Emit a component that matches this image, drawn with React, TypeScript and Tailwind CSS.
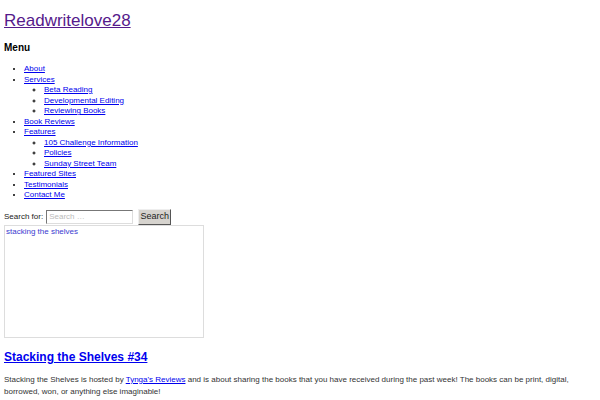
import React from 'react';

type MenuItem = { label: string; children?: string[] };

const menu: MenuItem[] = [
  { label: 'About' },
  { label: 'Services', children: ['Beta Reading', 'Developmental Editing', 'Reviewing Books'] },
  { label: 'Book Reviews' },
  { label: 'Features', children: ['105 Challenge Information', 'Policies', 'Sunday Street Team'] },
  { label: 'Featured Sites' },
  { label: 'Testimonials' },
  { label: 'Contact Me' },
];

const App: React.FC = () => {
  return (
    <div className="min-h-screen bg-white px-1 font-['Liberation_Sans',Arial,sans-serif] text-black">
      <h1 className="pt-[10px] text-[17px] leading-[22px]">
        <a href="#" className="text-[#551a8b] underline">Readwritelove28</a>
      </h1>

      <h2 className="mt-[10px] text-[10px] font-bold leading-[12px]">Menu</h2>

      <ul className="mt-[10px] list-disc pl-5 text-[8px] leading-[10.5px]">
        {menu.map((item) => (
          <li key={item.label}>
            <a href="#" className="text-[#0000ee] underline">{item.label}</a>
            {item.children && (
              <ul className="list-[circle] pl-5">
                {item.children.map((child) => (
                  <li key={child}>
                    <a href="#" className="text-[#0000ee] underline">{child}</a>
                  </li>
                ))}
              </ul>
            )}
          </li>
        ))}
      </ul>

      <form className="mt-[8px] flex items-center gap-[3px] text-[8px]">
        <label className="text-[#222]">Search for:</label>
        <input
          type="search"
          placeholder="Search …"
          className="h-[14px] w-[87px] border border-t-[#777] border-l-[#777] border-r-[#ddd] border-b-[#ddd] bg-white px-[2px] text-[8px] placeholder:text-[#bbb]"
        />
        <button
          type="button"
          className="ml-[2px] h-[16px] w-[33px] border border-t-[#eee] border-l-[#eee] border-r-[#555] border-b-[#555] bg-[#d6d3ce] text-[9px] text-[#222]"
        >
          Search
        </button>
      </form>

      <div className="h-[113px] w-[200px] border border-[#ddd] px-[1px] text-[8px] leading-[11px]">
        <span className="text-[#3a3ad0]">stacking the shelves</span>
      </div>

      <h2 className="mt-[11px] text-[12px] font-bold leading-[16px]">
        <a href="#" className="text-[#0000ee] underline">Stacking the Shelves #34</a>
      </h2>

      <p className="mt-[9px] text-[8px] leading-[12px] text-[#333]">
        Stacking the Shelves is hosted by{' '}
        <a href="#" className="text-[#0000ee] underline">Tynga's Reviews</a> and is about sharing the books that you have
        received during the past week! The books can be print, digital, borrowed, won, or anything else imaginable!
      </p>
    </div>
  );
};

export default App;
